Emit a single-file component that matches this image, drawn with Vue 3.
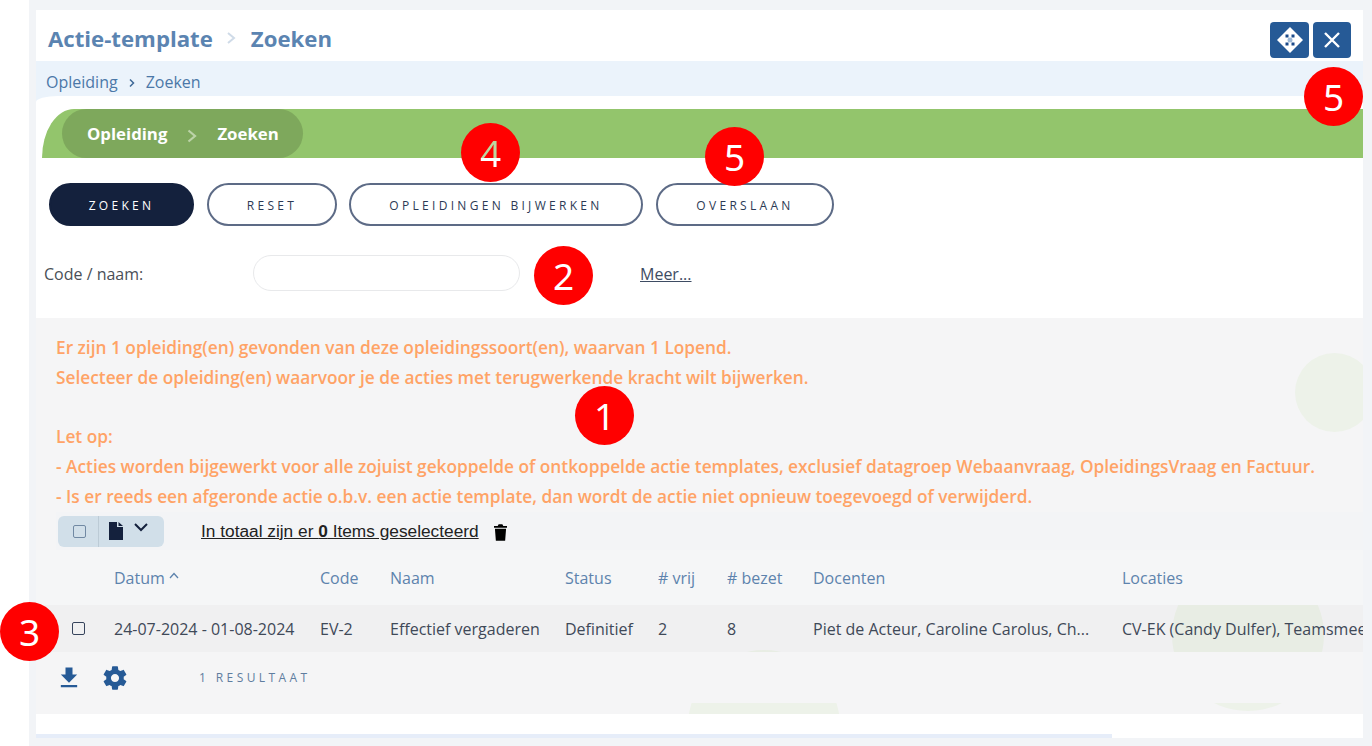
<script setup>
const buttons = [
  { label: 'ZOEKEN', w: 145, gap: 0, primary: true },
  { label: 'RESET', w: 130, gap: 13 },
  { label: 'OPLEIDINGEN BIJWERKEN', w: 294, gap: 12 },
  { label: 'OVERSLAAN', w: 178, gap: 13 }
]
const headers = ['Datum', 'Code', 'Naam', 'Status', '# vrij', '# bezet', 'Docenten', 'Locaties']
const cells = ['24-07-2024 - 01-08-2024', 'EV-2', 'Effectief vergaderen', 'Definitief', '2', '8', 'Piet de Acteur, Caroline Carolus, Ch...', 'CV-EK (Candy Dulfer), Teamsmeeting online']
const message = [
  'Er zijn 1 opleiding(en) gevonden van deze opleidingssoort(en), waarvan 1 Lopend.',
  'Selecteer de opleiding(en) waarvoor je de acties met terugwerkende kracht wilt bijwerken.',
  '\u00a0',
  'Let op:',
  '- Acties worden bijgewerkt voor alle zojuist gekoppelde of ontkoppelde actie templates, exclusief datagroep Webaanvraag, OpleidingsVraag en Factuur.',
  '- Is er reeds een afgeronde actie o.b.v. een actie template, dan wordt de actie niet opnieuw toegevoegd of verwijderd.'
]
const badges = [
  { n: 5, cls: 'b-close' },
  { n: 4, cls: 'b-update' },
  { n: 5, cls: 'b-skip' },
  { n: 2, cls: 'b-search' },
  { n: 1, cls: 'b-msg' },
  { n: 3, cls: 'b-row' }
]
</script>

<template>
  <div class="page">
    <div class="shell">
      <main class="card">
        <header class="title-bar">
          <h1 class="title">
            <span>Actie-template</span>
            <svg class="title-chev" viewBox="0 0 10 14"><path d="M2 2l6 5-6 5" /></svg>
            <span>Zoeken</span>
          </h1>
          <div class="title-actions">
            <button class="icon-btn" aria-label="Verplaatsen">
              <svg width="28" height="28" viewBox="0 0 28 28">
                <path d="M14 1l13 13-13 13L1 14z" fill="#fff" />
                <path d="M9.500 8.500h3v3h-3zM15.500 8.500h3v3h-3zM9.500 16.500h3v3h-3zM15.500 16.500h3v3h-3z" fill="#1b4a8a" />
                <circle cx="14" cy="14" r="2.500" fill="#9db8d6" />
              </svg>
            </button>
            <button class="icon-btn" aria-label="Sluiten">
              <svg width="20" height="20" viewBox="0 0 20 20"><path d="M3 3l14 14M17 3L3 17" stroke="#fff" stroke-width="2.400" /></svg>
            </button>
          </div>
        </header>

        <nav class="crumbs">
          <span>Opleiding</span>
          <svg class="crumb-chev" viewBox="0 0 8 10"><path d="M2 1.500L5.500 5 2 8.500" /></svg>
          <span>Zoeken</span>
        </nav>

        <div class="curve-wrap">
          <div class="upper">
            <div class="green-bar">
              <div class="pill">
                <span>Opleiding</span>
                <svg class="pill-chev" viewBox="0 0 12 16"><path d="M2.500 2.500L9 8l-6.500 5.500" /></svg>
                <span>Zoeken</span>
              </div>
            </div>

            <div class="actions">
              <button
                v-for="b in buttons"
                :key="b.label"
                class="pill-btn"
                :class="{ primary: b.primary }"
                :style="{ width: b.w + 'px', marginLeft: b.gap + 'px' }"
              >{{ b.label }}</button>
            </div>

            <div class="search-row">
              <label class="search-label" for="code">Code / naam:</label>
              <input id="code" class="search-input" type="text" />
              <a class="more" href="#">Meer...</a>
            </div>
          </div>
        </div>

        <section class="results">
          <i class="deco deco-a"></i>
          <i class="deco deco-b"></i>
          <i class="deco deco-c"></i>

          <div class="message">
            <p v-for="(line, i) in message" :key="i">{{ line }}</p>
          </div>

          <div class="toolbar">
            <div class="tool-group">
              <span class="tool-check"><i class="box box-soft"></i></span>
              <span class="tool-file">
                <svg width="16" height="18" viewBox="0 0 16 18"><path d="M1 0h8v5h6v13H1zM10.500 0L15 4h-4.500z" fill="#14213d" /></svg>
                <svg class="tool-chev" width="16" height="10" viewBox="0 0 16 10"><path d="M2 2l6 6 6-6" /></svg>
              </span>
            </div>
            <span class="selected">In totaal zijn er <b>0</b> Items geselecteerd</span>
            <svg class="trash" width="13" height="17" viewBox="0 0 14 18"><path d="M5 0h4l1 2h4v2H0V2h4zM1 5h12l-1 13H2z" fill="#000" /></svg>
          </div>

          <div class="grid-row grid-head">
            <span></span>
            <span v-for="(h, i) in headers" :key="h">{{ h }}<svg v-if="i === 0" class="sort" width="10" height="7" viewBox="0 0 10 7"><path d="M1 6l4-4.500L9 6" /></svg></span>
          </div>
          <div class="grid-row grid-data">
            <span class="row-check"><i class="box"></i></span>
            <span v-for="c in cells" :key="c">{{ c }}</span>
          </div>

          <div class="table-foot">
            <svg class="foot-dl" width="28" height="28" viewBox="0 0 24 24"><path d="M19 9h-4V3H9v6H5l7 7 7-7zM5 18v2h14v-2H5z" fill="#265a96" /></svg>
            <svg class="foot-gear" width="28" height="28" viewBox="0 0 24 24"><path d="M19.430 12.980c.04-.32.07-.64.07-.98s-.03-.66-.07-.98l2.110-1.650c.19-.15.240-.42.120-.64l-2-3.460c-.12-.22-.39-.3-.61-.22l-2.490 1c-.52-.4-1.080-.73-1.690-.98l-.38-2.650C14.460 2.180 14.250 2 14 2h-4c-.25 0-.46.180-.49.420l-.38 2.650c-.61.25-1.170.59-1.690.98l-2.490-1c-.23-.09-.49 0-.61.220l-2 3.460c-.13.220-.07.490.12.640l2.110 1.650c-.04.32-.07.650-.07.980s.03.660.07.980l-2.110 1.650c-.19.150-.24.420-.12.640l2 3.460c.12.220.39.300.61.220l2.490-1c.52.400 1.080.730 1.690.980l.38 2.650c.03.240.24.420.49.420h4c.25 0 .46-.180.49-.420l.38-2.650c.61-.250 1.170-.590 1.690-.980l2.490 1c.23.090.49 0 .61-.220l2-3.460c.12-.220.07-.490-.12-.640l-2.110-1.650zM12 15.500c-1.930 0-3.500-1.570-3.500-3.500s1.570-3.500 3.500-3.500 3.500 1.570 3.500 3.500-1.570 3.500-3.500 3.500z" fill="#265a96" /></svg>
            <span class="count">1 RESULTAAT</span>
          </div>
        </section>

        <footer class="card-foot"><div class="foot-line"></div></footer>
      </main>
    </div>

    <span v-for="b in badges" :key="b.cls" class="badge" :class="b.cls"><span class="digit">{{ b.n }}</span></span>
  </div>
</template>

<style>
html, body { margin: 0; background: #fff; }
</style>

<style scoped>
.page {
  position: relative;
  width: 1372px;
  height: 746px;
  overflow: hidden;
  background: #fff;
  font-family: "Open Sans", "Noto Sans", sans-serif;
}
.shell {
  margin-left: 29px;
  height: 746px;
  box-sizing: border-box;
  padding: 10px 9px 8px 7px;
  background: #f2f4f7;
}
.card {
  height: 728px;
  background: #fff;
  overflow: hidden;
  display: flex;
  flex-direction: column;
}

/* title */
.title-bar {
  height: 51px;
  flex: none;
  display: flex;
  justify-content: space-between;
  padding: 0 12px 0 12px;
}
.title {
  margin: 14px 0 0;
  height: 28px;
  display: flex;
  align-items: center;
  font-size: 22.200px;
  font-weight: 700;
  color: #5b84b1;
}
.title-chev {
  width: 10px;
  height: 14px;
  margin: 0 15px 0 13px;
  fill: none;
  stroke: #cfdbe8;
  stroke-width: 2;
}
.title-actions { display: flex; gap: 4px; margin-top: 12px; height: 36px; }
.icon-btn {
  width: 39px;
  height: 36px;
  padding: 0;
  display: flex;
  align-items: center;
  justify-content: center;
  background: #265a96;
  border: 0;
  border-radius: 4px;
}
.icon-btn + .icon-btn { width: 38px; }

/* crumbs */
.crumbs {
  height: 35px;
  flex: none;
  display: flex;
  align-items: center;
  padding: 7px 0 0 10px;
  box-sizing: border-box;
  background: #ebf3fb;
  font-size: 16px;
  color: #4b78a8;
}
.crumb-chev {
  width: 8px;
  height: 10px;
  margin: 2px 10px 0 10px;
  fill: none;
  stroke: #3f6a98;
  stroke-width: 1.500;
}
.curve-wrap {
  flex: none;
  background: linear-gradient(#ebf3fb 7px, #fff 7px);
}
.upper {
  background: #fff;
  border-top-left-radius: 22px 6px;
  padding-top: 13px;
  padding-bottom: 27px;
}

/* green */
.green-bar {
  margin-left: 6px;
  height: 49px;
  padding-left: 20px;
  background: #93c56c;
  border-top-left-radius: 32px 49px;
}
.pill {
  width: 241px;
  height: 49px;
  box-sizing: border-box;
  padding-left: 25px;
  display: flex;
  align-items: center;
  border-radius: 25px;
  background: #7ea85c;
  color: #fff;
  font-size: 16.800px;
  font-weight: 700;
}
.pill-chev {
  width: 12px;
  height: 16px;
  margin: 4px 19px 0 19px;
  fill: none;
  stroke: #bcd3a8;
  stroke-width: 2.200;
}

/* buttons */
.actions {
  display: flex;
  margin-top: 25px;
  padding-left: 13px;
}
.pill-btn {
  height: 43px;
  padding: 2px 0 0;
  box-sizing: border-box;
  background: #fff;
  border: 2px solid #5d6b86;
  border-radius: 22px;
  font-family: inherit;
  font-size: 12px;
  font-weight: 500;
  letter-spacing: 3.300px;
  color: #2c3a55;
}
.pill-btn.primary {
  background: #14213d;
  border-color: #14213d;
  color: #fff;
}

/* search */
.search-row {
  display: flex;
  align-items: center;
  margin-top: 29px;
  padding-left: 8px;
}
.search-label {
  width: 209px;
  padding-top: 1px;
  font-size: 16px;
  color: #4a4f57;
}
.search-input {
  width: 267px;
  height: 36px;
  box-sizing: border-box;
  border: 1px solid #e8e9eb;
  border-radius: 18px;
  background: #fff;
}
.more {
  margin-left: 120px;
  padding-top: 1px;
  font-size: 16px;
  color: #3e4c63;
  text-decoration: underline;
}

/* results */
.results {
  position: relative;
  height: 396px;
  flex: none;
  background: #f5f5f6;
  overflow: hidden;
}
.deco {
  position: absolute;
  z-index: 0;
  border-radius: 50%;
  background: #edf2e9;
}
.deco-a { left: 1259px; top: 35px; width: 79px; height: 79px; }
.deco-b { left: 1136px; top: 241px; width: 152px; height: 152px; }
.deco-c { left: 652px; top: 332px; width: 152px; height: 152px; }
.message {
  position: relative;
  z-index: 1;
  padding: 15px 0 0 20px;
  height: 179px;
  font-size: 17.300px;
  font-weight: 600;
  line-height: 29.700px;
  color: #ffa366;
}
.message p { margin: 0; white-space: nowrap; }
.toolbar {
  position: relative;
  z-index: 1;
  height: 38px;
  margin-left: 20px;
  display: flex;
  align-items: center;
  padding-left: 2px;
  background: #f3f4f6;
}
.tool-group {
  display: flex;
  height: 31px;
  width: 106px;
  border-radius: 6px;
  background: #d1dfe9;
  overflow: hidden;
}
.tool-check {
  width: 41px;
  display: flex;
  align-items: center;
  justify-content: center;
  padding-left: 3px;
  box-sizing: border-box;
  border-right: 1px solid #bccbd6;
}
.tool-file {
  display: flex;
  align-items: center;
  gap: 9px;
  padding-left: 9px;
}
.tool-chev {
  margin-top: -8px;
  fill: none;
  stroke: #14213d;
  stroke-width: 2;
}
.box {
  display: block;
  width: 11px;
  height: 11px;
  border: 1.500px solid #36445c;
  border-radius: 2px;
}
.box-soft { border-color: #7189a3; }
.selected {
  margin-left: 37px;
  font-family: "Liberation Sans", Arial, sans-serif;
  font-size: 17.300px;
  color: #222;
  text-decoration: underline;
}
.trash { margin-left: 15px; margin-top: 3px; }

.grid-row {
  position: relative;
  z-index: 1;
  display: grid;
  grid-template-columns: 78px 206px 70px 175px 93px 69px 86px 309px 1fr;
  align-items: center;
  white-space: nowrap;
  font-size: 16px;
}
.grid-row > span { overflow: hidden; }
.grid-head {
  height: 55px;
  background: #f5f6f7;
  color: #5d83ad;
}
.sort {
  margin: 0 0 5px 4px;
  fill: none;
  stroke: #5d83ad;
  stroke-width: 1.300;
}
.grid-data {
  height: 47px;
  background: rgba(0, 0, 0, 0.02);
  color: #3f4958;
}
.row-check {
  display: flex;
  justify-content: flex-end;
  padding-right: 29px;
}
.table-foot {
  position: relative;
  z-index: 1;
  height: 51px;
  display: flex;
  align-items: center;
  padding-left: 19px;
  background: #f5f5f6;
}
.foot-gear { margin-left: 18px; }
.count {
  margin-left: 70px;
  font-size: 12px;
  font-weight: 500;
  letter-spacing: 3.400px;
  color: #5f7d9f;
}

/* bottom */
.card-foot {
  flex: 1;
  background: #fff;
  position: relative;
}
.foot-line {
  position: absolute;
  left: 0;
  bottom: 0;
  width: 1076px;
  height: 4px;
  background: #e6edf9;
}

/* numbered callouts over the shot */
.badge {
  position: absolute;
  z-index: 3;
  width: 59px;
  height: 59px;
  display: flex;
  align-items: center;
  justify-content: center;
  border-radius: 50%;
  background: #ff0000;
  color: #fff;
  font-family: "Noto Sans", "Open Sans", sans-serif;
  font-size: 37px;
  line-height: 1;
}
.b-close { left: 1304px; top: 67px; }
.b-update { left: 461px; top: 123px; }
.b-update .digit {
  color: transparent;
  background: linear-gradient(#bcd8a0 24px, #fff 24px);
  -webkit-background-clip: text;
  background-clip: text;
}
.b-skip { left: 705px; top: 127px; }
.b-search { left: 534px; top: 246px; }
.b-msg { left: 575px; top: 386px; }
.b-row { left: 0; top: 602px; }
</style>
